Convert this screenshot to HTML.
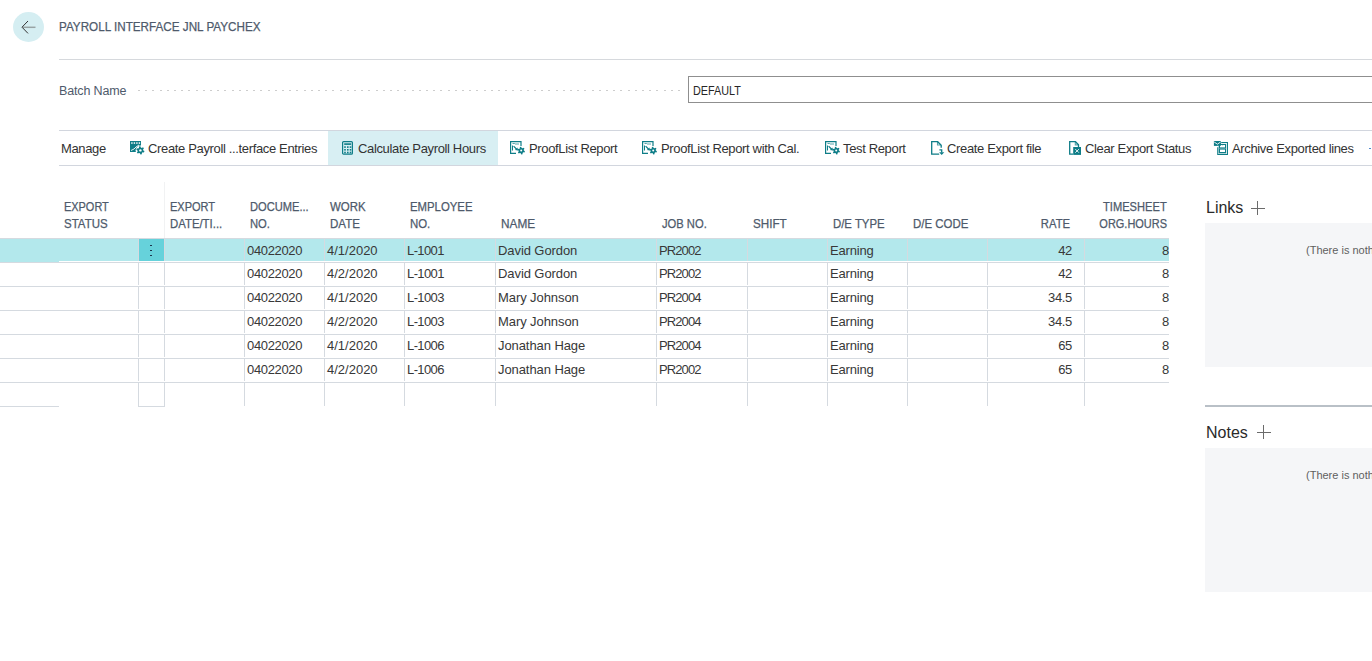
<!DOCTYPE html>
<html><head><meta charset="utf-8">
<style>
*{margin:0;padding:0;box-sizing:border-box}
html,body{width:1372px;height:661px;overflow:hidden;background:#fff}
body{position:relative;font-family:"Liberation Sans", sans-serif;color:#212121}
.a{position:absolute;white-space:nowrap}
svg{position:absolute;overflow:visible}
</style></head><body>

<div class="a" style="left:13px;top:12px;width:31px;height:30px;border-radius:50%;background:#d5eef2"></div>
<svg style="left:0;top:0" width="60" height="60"><path d="M23 27.3H35.5" fill="none" stroke="#98a3a4" stroke-width="1.5"/><path d="M28 21L22 27.2L28 33.4" fill="none" stroke="#333" stroke-width="1"/></svg>
<div class="a " style="left:59px;top:21px;font-size:12.5px;line-height:12.5px;color:#4e5a6b;transform:scaleX(0.935);transform-origin:0 0;-webkit-text-stroke:0.25px #4e5a6b;">PAYROLL INTERFACE JNL PAYCHEX</div>
<div class="a" style="left:59px;top:59px;width:1313px;height:1px;background:#d6d9dd;"></div>
<div class="a " style="left:59px;top:85px;font-size:12.5px;line-height:12.5px;color:#4e5a6b;letter-spacing:-0.15px;">Batch Name</div>
<svg style="left:0;top:0" width="700" height="100"><path fill="#cdcdcd" d="M138 90h2v1h-2zM145 90h2v1h-2zM152 90h2v1h-2zM160 90h2v1h-2zM167 90h2v1h-2zM174 90h2v1h-2zM181 90h2v1h-2zM188 90h2v1h-2zM196 90h2v1h-2zM203 90h2v1h-2zM210 90h2v1h-2zM217 90h2v1h-2zM224 90h2v1h-2zM232 90h2v1h-2zM239 90h2v1h-2zM246 90h2v1h-2zM253 90h2v1h-2zM260 90h2v1h-2zM268 90h2v1h-2zM275 90h2v1h-2zM282 90h2v1h-2zM289 90h2v1h-2zM296 90h2v1h-2zM304 90h2v1h-2zM311 90h2v1h-2zM318 90h2v1h-2zM325 90h2v1h-2zM332 90h2v1h-2zM340 90h2v1h-2zM347 90h2v1h-2zM354 90h2v1h-2zM361 90h2v1h-2zM368 90h2v1h-2zM376 90h2v1h-2zM383 90h2v1h-2zM390 90h2v1h-2zM397 90h2v1h-2zM404 90h2v1h-2zM412 90h2v1h-2zM419 90h2v1h-2zM426 90h2v1h-2zM433 90h2v1h-2zM440 90h2v1h-2zM448 90h2v1h-2zM455 90h2v1h-2zM462 90h2v1h-2zM469 90h2v1h-2zM476 90h2v1h-2zM484 90h2v1h-2zM491 90h2v1h-2zM498 90h2v1h-2zM505 90h2v1h-2zM512 90h2v1h-2zM520 90h2v1h-2zM527 90h2v1h-2zM534 90h2v1h-2zM541 90h2v1h-2zM548 90h2v1h-2zM556 90h2v1h-2zM563 90h2v1h-2zM570 90h2v1h-2zM577 90h2v1h-2zM584 90h2v1h-2zM592 90h2v1h-2zM599 90h2v1h-2zM606 90h2v1h-2zM613 90h2v1h-2zM620 90h2v1h-2zM628 90h2v1h-2zM635 90h2v1h-2zM642 90h2v1h-2zM649 90h2v1h-2zM656 90h2v1h-2zM664 90h2v1h-2zM671 90h2v1h-2zM678 90h2v1h-2z"/></svg>
<div class="a" style="left:688px;top:76px;width:700px;height:27px;border:1px solid #8f8f8f"></div>
<div class="a " style="left:693px;top:85px;font-size:12px;line-height:12px;color:#262626;transform:scaleX(0.9);transform-origin:0 0;">DEFAULT</div>
<div class="a" style="left:59px;top:130px;width:1313px;height:1px;background:#d2d6de;"></div>
<div class="a" style="left:59px;top:165px;width:1313px;height:1px;background:#d2d6de;"></div>
<div class="a" style="left:328px;top:131px;width:170px;height:34px;background:#d8eff3;"></div>
<div class="a " style="left:61px;top:142px;font-size:13px;line-height:13px;color:#333333;letter-spacing:-0.35px;">Manage</div>
<div class="a " style="left:148px;top:142px;font-size:13px;line-height:13px;color:#333333;letter-spacing:-0.35px;">Create Payroll ...terface Entries</div>
<div class="a " style="left:358px;top:142px;font-size:13px;line-height:13px;color:#333333;letter-spacing:-0.35px;">Calculate Payroll Hours</div>
<div class="a " style="left:529px;top:142px;font-size:13px;line-height:13px;color:#333333;letter-spacing:-0.35px;">ProofList Report</div>
<div class="a " style="left:661px;top:142px;font-size:13px;line-height:13px;color:#333333;letter-spacing:-0.35px;">ProofList Report with Cal.</div>
<div class="a " style="left:843px;top:142px;font-size:13px;line-height:13px;color:#333333;letter-spacing:-0.35px;">Test Report</div>
<div class="a " style="left:947px;top:142px;font-size:13px;line-height:13px;color:#333333;letter-spacing:-0.35px;">Create Export file</div>
<div class="a " style="left:1085px;top:142px;font-size:13px;line-height:13px;color:#333333;letter-spacing:-0.35px;">Clear Export Status</div>
<div class="a " style="left:1232px;top:142px;font-size:13px;line-height:13px;color:#333333;letter-spacing:-0.35px;">Archive Exported lines</div>
<div class="a" style="left:1369px;top:147.5px;width:1.7px;height:1.7px;border-radius:1px;background:#3a78c8"></div>
<svg style="left:130px;top:141px" width="16" height="16" viewBox="0 0 16 16">
<rect x="0" y="0" width="11" height="11" fill="#0e7d87"/>
<rect x="1.2" y="1.3" width="1.4" height="1.5" fill="#fff"/><rect x="3.7" y="1.3" width="1.4" height="1.5" fill="#fff"/>
<rect x="6.2" y="1.3" width="1.4" height="1.5" fill="#fff"/><rect x="8.7" y="1.3" width="1.4" height="1.5" fill="#fff"/>
<path d="M1 9.5L4 8L6 6L9 4" stroke="#fff" stroke-width="0.9" fill="none"/>
<circle cx="10.4" cy="9.4" r="4.8" fill="#fff"/><path d="M13.30 9.40L14.45 10.04L13.95 11.45L12.65 11.23L11.85 11.91L11.87 13.23L10.40 13.50L9.95 12.26L8.95 11.91L7.82 12.59L6.85 11.45L7.69 10.44L7.50 9.40L6.35 8.76L6.85 7.35L8.15 7.57L8.95 6.89L8.93 5.57L10.40 5.30L10.85 6.54L11.85 6.89L12.98 6.21L13.95 7.35L13.11 8.36Z" fill="#0e7d87"/><circle cx="10.4" cy="9.4" r="1.2" fill="#fff"/>
</svg>
<svg style="left:341px;top:140px" width="14" height="16" viewBox="0 0 14 16">
<rect x="1.6" y="1.6" width="9.8" height="12.6" rx="1" fill="none" stroke="#0e7d87" stroke-width="1.2"/>
<rect x="3.2" y="3.3" width="7" height="1.6" fill="#0e7d87"/>
<g fill="#0e7d87"><rect x="3.2" y="6.3" width="1.6" height="1.6"/><rect x="6" y="6.3" width="1.6" height="1.6"/><rect x="8.7" y="6.3" width="1.6" height="1.6"/>
<rect x="3.2" y="9" width="1.6" height="1.6"/><rect x="6" y="9" width="1.6" height="1.6"/><rect x="8.7" y="9" width="1.6" height="1.6"/>
<rect x="3.2" y="11.7" width="1.6" height="1.6"/><rect x="6" y="11.7" width="1.6" height="1.6"/><rect x="8.7" y="11.7" width="1.6" height="1.6"/></g>
</svg>
<svg style="left:510px;top:141px" width="16" height="16" viewBox="0 0 16 16">
<path d="M6 12.4H0.6V0.6H11V5" fill="none" stroke="#0e7d87" stroke-width="1.2"/>
<path d="M2.5 2.5H4.5L5 3H9" stroke="#0e7d87" stroke-width="1" fill="none" opacity="0.7"/>
<path d="M2.5 4.5V9.5" stroke="#0e7d87" stroke-width="1" fill="none"/>
<circle cx="11.2" cy="9.6" r="4.5" fill="#fff"/><path d="M13.90 9.60L14.95 10.19L14.49 11.50L13.30 11.30L12.55 11.94L12.56 13.15L11.20 13.40L10.78 12.27L9.85 11.94L8.81 12.55L7.91 11.50L8.68 10.57L8.50 9.60L7.45 9.01L7.91 7.70L9.10 7.90L9.85 7.26L9.84 6.05L11.20 5.80L11.62 6.93L12.55 7.26L13.59 6.65L14.49 7.70L13.72 8.63Z" fill="#0e7d87"/><circle cx="11.2" cy="9.6" r="1.0" fill="#fff"/>
<path d="M3.6 5.2L6.9 8.5" stroke="#0e7d87" stroke-width="1.2" fill="none"/>
<path d="M8.0 9.6L4.9 9.1L7.5 6.5Z" fill="#0e7d87"/>
</svg>
<svg style="left:642px;top:141px" width="16" height="16" viewBox="0 0 16 16">
<path d="M6 12.4H0.6V0.6H11V5" fill="none" stroke="#0e7d87" stroke-width="1.2"/>
<path d="M2.5 2.5H4.5L5 3H9" stroke="#0e7d87" stroke-width="1" fill="none" opacity="0.7"/>
<path d="M2.5 4.5V9.5" stroke="#0e7d87" stroke-width="1" fill="none"/>
<circle cx="11.2" cy="9.6" r="4.5" fill="#fff"/><path d="M13.90 9.60L14.95 10.19L14.49 11.50L13.30 11.30L12.55 11.94L12.56 13.15L11.20 13.40L10.78 12.27L9.85 11.94L8.81 12.55L7.91 11.50L8.68 10.57L8.50 9.60L7.45 9.01L7.91 7.70L9.10 7.90L9.85 7.26L9.84 6.05L11.20 5.80L11.62 6.93L12.55 7.26L13.59 6.65L14.49 7.70L13.72 8.63Z" fill="#0e7d87"/><circle cx="11.2" cy="9.6" r="1.0" fill="#fff"/>
<path d="M3.6 5.2L6.9 8.5" stroke="#0e7d87" stroke-width="1.2" fill="none"/>
<path d="M8.0 9.6L4.9 9.1L7.5 6.5Z" fill="#0e7d87"/>
</svg>
<svg style="left:825px;top:141px" width="16" height="16" viewBox="0 0 16 16">
<path d="M6 12.4H0.6V0.6H11V5" fill="none" stroke="#0e7d87" stroke-width="1.2"/>
<path d="M2.5 2.5H4.5L5 3H9" stroke="#0e7d87" stroke-width="1" fill="none" opacity="0.7"/>
<path d="M2.5 4.5V9.5" stroke="#0e7d87" stroke-width="1" fill="none"/>
<circle cx="11.2" cy="9.6" r="4.5" fill="#fff"/><path d="M13.90 9.60L14.95 10.19L14.49 11.50L13.30 11.30L12.55 11.94L12.56 13.15L11.20 13.40L10.78 12.27L9.85 11.94L8.81 12.55L7.91 11.50L8.68 10.57L8.50 9.60L7.45 9.01L7.91 7.70L9.10 7.90L9.85 7.26L9.84 6.05L11.20 5.80L11.62 6.93L12.55 7.26L13.59 6.65L14.49 7.70L13.72 8.63Z" fill="#0e7d87"/><circle cx="11.2" cy="9.6" r="1.0" fill="#fff"/>
<path d="M3.6 5.2L6.9 8.5" stroke="#0e7d87" stroke-width="1.2" fill="none"/>
<path d="M8.0 9.6L4.9 9.1L7.5 6.5Z" fill="#0e7d87"/>
</svg>
<svg style="left:931px;top:141px" width="15" height="15" viewBox="0 0 15 15">
<path d="M8.2 13.2H0.7V0.7H6.7L10.2 4.2V6.8" fill="none" stroke="#0e7d87" stroke-width="1.3"/>
<path d="M6.5 1V4H9.8" fill="none" stroke="#0e7d87" stroke-width="1.1" opacity="0.7"/>
<path d="M8.4 8.9H10.7V11.6" fill="none" stroke="#0e7d87" stroke-width="1.3"/>
<path d="M8.1 11.2H13.3L10.7 14.1Z" fill="#0e7d87"/>
</svg>
<svg style="left:1069px;top:141px" width="14" height="15" viewBox="0 0 14 15">
<path d="M4 13.2H0.7V0.7H6.5L9.5 3.7V6" fill="none" stroke="#0e7d87" stroke-width="1.3"/>
<path d="M6.3 1V3.9H9.3" fill="none" stroke="#0e7d87" stroke-width="1.1" opacity="0.7"/>
<rect x="4.2" y="6" width="7.8" height="7.9" fill="#0e7d87"/>
<path d="M6.3 8.1L9.9 11.7M9.9 8.1L6.3 11.7" stroke="#fff" stroke-width="0.9"/>
</svg>
<svg style="left:1213px;top:141px" width="16" height="15" viewBox="0 0 16 15">
<rect x="0.9" y="0" width="7" height="4.9" fill="#0e7d87"/>
<path d="M1.2 1L4.4 3.2L7.6 1" stroke="#fff" stroke-width="0.9" fill="none"/>
<rect x="4" y="4.9" width="4" height="2" fill="#fff"/>
<path d="M8.2 1.55H14.45V13.45H4.75V6.2" fill="none" stroke="#0e7d87" stroke-width="1.1"/>
<path d="M5.9 5V12.3H13.2" fill="none" stroke="#0e7d87" stroke-width="0.8" opacity="0.45"/>
<rect x="6.45" y="3.45" width="6.1" height="3.5" fill="none" stroke="#0e7d87" stroke-width="1.1"/>
<rect x="6.45" y="8.05" width="6.1" height="3.5" fill="none" stroke="#0e7d87" stroke-width="1.1"/>
<rect x="8.8" y="3" width="1.4" height="1.2" fill="#0e7d87"/>
</svg>
<div class="a" style="left:164px;top:182px;width:1px;height:56px;background:#f1f2f3;"></div>
<div class="a " style="left:64px;top:201px;font-size:12px;line-height:12px;color:#4e5a6b;-webkit-text-stroke:0.25px #4e5a6b;transform:scaleX(0.911);transform-origin:0 0;">EXPORT</div>
<div class="a " style="left:64px;top:218px;font-size:12px;line-height:12px;color:#4e5a6b;-webkit-text-stroke:0.25px #4e5a6b;transform:scaleX(0.957);transform-origin:0 0;">STATUS</div>
<div class="a " style="left:170px;top:201px;font-size:12px;line-height:12px;color:#4e5a6b;-webkit-text-stroke:0.25px #4e5a6b;transform:scaleX(0.918);transform-origin:0 0;">EXPORT</div>
<div class="a " style="left:170px;top:218px;font-size:12px;line-height:12px;color:#4e5a6b;-webkit-text-stroke:0.25px #4e5a6b;transform:scaleX(0.947);transform-origin:0 0;">DATE/TI...</div>
<div class="a " style="left:250px;top:201px;font-size:12px;line-height:12px;color:#4e5a6b;-webkit-text-stroke:0.25px #4e5a6b;transform:scaleX(0.927);transform-origin:0 0;">DOCUME...</div>
<div class="a " style="left:250px;top:218px;font-size:12px;line-height:12px;color:#4e5a6b;-webkit-text-stroke:0.25px #4e5a6b;transform:scaleX(0.935);transform-origin:0 0;">NO.</div>
<div class="a " style="left:330px;top:201px;font-size:12px;line-height:12px;color:#4e5a6b;-webkit-text-stroke:0.25px #4e5a6b;transform:scaleX(0.955);transform-origin:0 0;">WORK</div>
<div class="a " style="left:330px;top:218px;font-size:12px;line-height:12px;color:#4e5a6b;-webkit-text-stroke:0.25px #4e5a6b;transform:scaleX(0.963);transform-origin:0 0;">DATE</div>
<div class="a " style="left:410px;top:201px;font-size:12px;line-height:12px;color:#4e5a6b;-webkit-text-stroke:0.25px #4e5a6b;transform:scaleX(0.946);transform-origin:0 0;">EMPLOYEE</div>
<div class="a " style="left:410px;top:218px;font-size:12px;line-height:12px;color:#4e5a6b;-webkit-text-stroke:0.25px #4e5a6b;transform:scaleX(0.951);transform-origin:0 0;">NO.</div>
<div class="a " style="left:501px;top:218px;font-size:12px;line-height:12px;color:#4e5a6b;-webkit-text-stroke:0.25px #4e5a6b;transform:scaleX(0.984);transform-origin:0 0;">NAME</div>
<div class="a " style="left:662px;top:218px;font-size:12px;line-height:12px;color:#4e5a6b;-webkit-text-stroke:0.25px #4e5a6b;transform:scaleX(0.932);transform-origin:0 0;">JOB NO.</div>
<div class="a " style="left:753px;top:218px;font-size:12px;line-height:12px;color:#4e5a6b;-webkit-text-stroke:0.25px #4e5a6b;transform:scaleX(0.972);transform-origin:0 0;">SHIFT</div>
<div class="a " style="left:833px;top:218px;font-size:12px;line-height:12px;color:#4e5a6b;-webkit-text-stroke:0.25px #4e5a6b;transform:scaleX(0.947);transform-origin:0 0;">D/E TYPE</div>
<div class="a " style="left:913px;top:218px;font-size:12px;line-height:12px;color:#4e5a6b;-webkit-text-stroke:0.25px #4e5a6b;transform:scaleX(0.953);transform-origin:0 0;">D/E CODE</div>
<div class="a " style="right:302px;top:218px;font-size:12px;line-height:12px;color:#4e5a6b;-webkit-text-stroke:0.25px #4e5a6b;transform:scaleX(0.94);transform-origin:100% 0;">RATE</div>
<div class="a " style="right:205px;top:201px;font-size:12px;line-height:12px;color:#4e5a6b;-webkit-text-stroke:0.25px #4e5a6b;transform:scaleX(0.926);transform-origin:100% 0;">TIMESHEET</div>
<div class="a " style="right:205px;top:218px;font-size:12px;line-height:12px;color:#4e5a6b;-webkit-text-stroke:0.25px #4e5a6b;transform:scaleX(0.914);transform-origin:100% 0;">ORG.HOURS</div>
<div class="a" style="left:0px;top:239px;width:1169px;height:22px;background:#b3e8ec;"></div>
<div class="a" style="left:0px;top:261px;width:59px;height:1px;background:#b3e8ec;"></div>
<div class="a" style="left:139px;top:239px;width:25px;height:22px;background:#66d2db;"></div>
<div class="a" style="left:59px;top:261px;width:1110px;height:1px;background:#ffffff;"></div>
<div class="a" style="left:150.4px;top:244.65px;width:1.7px;height:1.7px;border-radius:1px;background:#14203a"></div>
<div class="a" style="left:150.4px;top:249.65px;width:1.7px;height:1.7px;border-radius:1px;background:#14203a"></div>
<div class="a" style="left:150.4px;top:254.65px;width:1.7px;height:1.7px;border-radius:1px;background:#14203a"></div>
<div class="a" style="left:0px;top:238px;width:1169px;height:1px;background:#d5dae0;"></div>
<div class="a" style="left:0px;top:262px;width:1169px;height:1px;background:#d5dae0;"></div>
<div class="a" style="left:0px;top:286px;width:1169px;height:1px;background:#d5dae0;"></div>
<div class="a" style="left:0px;top:310px;width:1169px;height:1px;background:#d5dae0;"></div>
<div class="a" style="left:0px;top:334px;width:1169px;height:1px;background:#d5dae0;"></div>
<div class="a" style="left:0px;top:358px;width:1169px;height:1px;background:#d5dae0;"></div>
<div class="a" style="left:0px;top:382px;width:1169px;height:1px;background:#d5dae0;"></div>
<div class="a" style="left:0px;top:406px;width:59px;height:1px;background:#d5dae0;"></div>
<div class="a" style="left:138px;top:406px;width:27px;height:1px;background:#d5dae0;"></div>
<div class="a" style="left:138px;top:239px;width:1px;height:22px;background:#d5dae0;"></div>
<div class="a" style="left:164px;top:239px;width:1px;height:22px;background:#d5dae0;"></div>
<div class="a" style="left:244px;top:239px;width:1px;height:22px;background:#d5dae0;"></div>
<div class="a" style="left:324px;top:239px;width:1px;height:22px;background:#d5dae0;"></div>
<div class="a" style="left:404px;top:239px;width:1px;height:22px;background:#d5dae0;"></div>
<div class="a" style="left:495px;top:239px;width:1px;height:22px;background:#d5dae0;"></div>
<div class="a" style="left:656px;top:239px;width:1px;height:22px;background:#d5dae0;"></div>
<div class="a" style="left:747px;top:239px;width:1px;height:22px;background:#d5dae0;"></div>
<div class="a" style="left:827px;top:239px;width:1px;height:22px;background:#d5dae0;"></div>
<div class="a" style="left:907px;top:239px;width:1px;height:22px;background:#d5dae0;"></div>
<div class="a" style="left:987px;top:239px;width:1px;height:22px;background:#d5dae0;"></div>
<div class="a" style="left:1084px;top:239px;width:1px;height:22px;background:#d5dae0;"></div>
<div class="a" style="left:138px;top:263px;width:1px;height:22px;background:#d5dae0;"></div>
<div class="a" style="left:164px;top:263px;width:1px;height:22px;background:#d5dae0;"></div>
<div class="a" style="left:244px;top:263px;width:1px;height:22px;background:#d5dae0;"></div>
<div class="a" style="left:324px;top:263px;width:1px;height:22px;background:#d5dae0;"></div>
<div class="a" style="left:404px;top:263px;width:1px;height:22px;background:#d5dae0;"></div>
<div class="a" style="left:495px;top:263px;width:1px;height:22px;background:#d5dae0;"></div>
<div class="a" style="left:656px;top:263px;width:1px;height:22px;background:#d5dae0;"></div>
<div class="a" style="left:747px;top:263px;width:1px;height:22px;background:#d5dae0;"></div>
<div class="a" style="left:827px;top:263px;width:1px;height:22px;background:#d5dae0;"></div>
<div class="a" style="left:907px;top:263px;width:1px;height:22px;background:#d5dae0;"></div>
<div class="a" style="left:987px;top:263px;width:1px;height:22px;background:#d5dae0;"></div>
<div class="a" style="left:1084px;top:263px;width:1px;height:22px;background:#d5dae0;"></div>
<div class="a" style="left:138px;top:287px;width:1px;height:22px;background:#d5dae0;"></div>
<div class="a" style="left:164px;top:287px;width:1px;height:22px;background:#d5dae0;"></div>
<div class="a" style="left:244px;top:287px;width:1px;height:22px;background:#d5dae0;"></div>
<div class="a" style="left:324px;top:287px;width:1px;height:22px;background:#d5dae0;"></div>
<div class="a" style="left:404px;top:287px;width:1px;height:22px;background:#d5dae0;"></div>
<div class="a" style="left:495px;top:287px;width:1px;height:22px;background:#d5dae0;"></div>
<div class="a" style="left:656px;top:287px;width:1px;height:22px;background:#d5dae0;"></div>
<div class="a" style="left:747px;top:287px;width:1px;height:22px;background:#d5dae0;"></div>
<div class="a" style="left:827px;top:287px;width:1px;height:22px;background:#d5dae0;"></div>
<div class="a" style="left:907px;top:287px;width:1px;height:22px;background:#d5dae0;"></div>
<div class="a" style="left:987px;top:287px;width:1px;height:22px;background:#d5dae0;"></div>
<div class="a" style="left:1084px;top:287px;width:1px;height:22px;background:#d5dae0;"></div>
<div class="a" style="left:138px;top:311px;width:1px;height:22px;background:#d5dae0;"></div>
<div class="a" style="left:164px;top:311px;width:1px;height:22px;background:#d5dae0;"></div>
<div class="a" style="left:244px;top:311px;width:1px;height:22px;background:#d5dae0;"></div>
<div class="a" style="left:324px;top:311px;width:1px;height:22px;background:#d5dae0;"></div>
<div class="a" style="left:404px;top:311px;width:1px;height:22px;background:#d5dae0;"></div>
<div class="a" style="left:495px;top:311px;width:1px;height:22px;background:#d5dae0;"></div>
<div class="a" style="left:656px;top:311px;width:1px;height:22px;background:#d5dae0;"></div>
<div class="a" style="left:747px;top:311px;width:1px;height:22px;background:#d5dae0;"></div>
<div class="a" style="left:827px;top:311px;width:1px;height:22px;background:#d5dae0;"></div>
<div class="a" style="left:907px;top:311px;width:1px;height:22px;background:#d5dae0;"></div>
<div class="a" style="left:987px;top:311px;width:1px;height:22px;background:#d5dae0;"></div>
<div class="a" style="left:1084px;top:311px;width:1px;height:22px;background:#d5dae0;"></div>
<div class="a" style="left:138px;top:335px;width:1px;height:22px;background:#d5dae0;"></div>
<div class="a" style="left:164px;top:335px;width:1px;height:22px;background:#d5dae0;"></div>
<div class="a" style="left:244px;top:335px;width:1px;height:22px;background:#d5dae0;"></div>
<div class="a" style="left:324px;top:335px;width:1px;height:22px;background:#d5dae0;"></div>
<div class="a" style="left:404px;top:335px;width:1px;height:22px;background:#d5dae0;"></div>
<div class="a" style="left:495px;top:335px;width:1px;height:22px;background:#d5dae0;"></div>
<div class="a" style="left:656px;top:335px;width:1px;height:22px;background:#d5dae0;"></div>
<div class="a" style="left:747px;top:335px;width:1px;height:22px;background:#d5dae0;"></div>
<div class="a" style="left:827px;top:335px;width:1px;height:22px;background:#d5dae0;"></div>
<div class="a" style="left:907px;top:335px;width:1px;height:22px;background:#d5dae0;"></div>
<div class="a" style="left:987px;top:335px;width:1px;height:22px;background:#d5dae0;"></div>
<div class="a" style="left:1084px;top:335px;width:1px;height:22px;background:#d5dae0;"></div>
<div class="a" style="left:138px;top:359px;width:1px;height:22px;background:#d5dae0;"></div>
<div class="a" style="left:164px;top:359px;width:1px;height:22px;background:#d5dae0;"></div>
<div class="a" style="left:244px;top:359px;width:1px;height:22px;background:#d5dae0;"></div>
<div class="a" style="left:324px;top:359px;width:1px;height:22px;background:#d5dae0;"></div>
<div class="a" style="left:404px;top:359px;width:1px;height:22px;background:#d5dae0;"></div>
<div class="a" style="left:495px;top:359px;width:1px;height:22px;background:#d5dae0;"></div>
<div class="a" style="left:656px;top:359px;width:1px;height:22px;background:#d5dae0;"></div>
<div class="a" style="left:747px;top:359px;width:1px;height:22px;background:#d5dae0;"></div>
<div class="a" style="left:827px;top:359px;width:1px;height:22px;background:#d5dae0;"></div>
<div class="a" style="left:907px;top:359px;width:1px;height:22px;background:#d5dae0;"></div>
<div class="a" style="left:987px;top:359px;width:1px;height:22px;background:#d5dae0;"></div>
<div class="a" style="left:1084px;top:359px;width:1px;height:22px;background:#d5dae0;"></div>
<div class="a" style="left:138px;top:383px;width:1px;height:23px;background:#d5dae0;"></div>
<div class="a" style="left:164px;top:383px;width:1px;height:23px;background:#d5dae0;"></div>
<div class="a" style="left:244px;top:383px;width:1px;height:23px;background:#d5dae0;"></div>
<div class="a" style="left:324px;top:383px;width:1px;height:23px;background:#d5dae0;"></div>
<div class="a" style="left:404px;top:383px;width:1px;height:23px;background:#d5dae0;"></div>
<div class="a" style="left:495px;top:383px;width:1px;height:23px;background:#d5dae0;"></div>
<div class="a" style="left:656px;top:383px;width:1px;height:23px;background:#d5dae0;"></div>
<div class="a" style="left:747px;top:383px;width:1px;height:23px;background:#d5dae0;"></div>
<div class="a" style="left:827px;top:383px;width:1px;height:23px;background:#d5dae0;"></div>
<div class="a" style="left:907px;top:383px;width:1px;height:23px;background:#d5dae0;"></div>
<div class="a" style="left:987px;top:383px;width:1px;height:23px;background:#d5dae0;"></div>
<div class="a" style="left:1084px;top:383px;width:1px;height:23px;background:#d5dae0;"></div>
<div class="a " style="left:247px;top:244px;font-size:13px;line-height:13px;color:#383838;letter-spacing:-0.35px;">04022020</div>
<div class="a " style="left:327px;top:244px;font-size:13px;line-height:13px;color:#383838;letter-spacing:0.0px;">4/1/2020</div>
<div class="a " style="left:407px;top:244px;font-size:13px;line-height:13px;color:#383838;letter-spacing:-0.6px;">L-1001</div>
<div class="a " style="left:498px;top:244px;font-size:13px;line-height:13px;color:#383838;letter-spacing:-0.08px;">David Gordon</div>
<div class="a " style="left:659px;top:244px;font-size:13px;line-height:13px;color:#383838;letter-spacing:-0.9px;">PR2002</div>
<div class="a " style="left:830px;top:244px;font-size:13px;line-height:13px;color:#383838;letter-spacing:-0.18px;">Earning</div>
<div class="a " style="right:300px;top:244px;font-size:13px;line-height:13px;color:#383838;letter-spacing:-0.35px;">42</div>
<div class="a " style="right:203px;top:244px;font-size:13px;line-height:13px;color:#383838;letter-spacing:-0.35px;">8</div>
<div class="a " style="left:247px;top:267px;font-size:13px;line-height:13px;color:#383838;letter-spacing:-0.35px;">04022020</div>
<div class="a " style="left:327px;top:267px;font-size:13px;line-height:13px;color:#383838;letter-spacing:0.0px;">4/2/2020</div>
<div class="a " style="left:407px;top:267px;font-size:13px;line-height:13px;color:#383838;letter-spacing:-0.6px;">L-1001</div>
<div class="a " style="left:498px;top:267px;font-size:13px;line-height:13px;color:#383838;letter-spacing:-0.08px;">David Gordon</div>
<div class="a " style="left:659px;top:267px;font-size:13px;line-height:13px;color:#383838;letter-spacing:-0.9px;">PR2002</div>
<div class="a " style="left:830px;top:267px;font-size:13px;line-height:13px;color:#383838;letter-spacing:-0.18px;">Earning</div>
<div class="a " style="right:300px;top:267px;font-size:13px;line-height:13px;color:#383838;letter-spacing:-0.35px;">42</div>
<div class="a " style="right:203px;top:267px;font-size:13px;line-height:13px;color:#383838;letter-spacing:-0.35px;">8</div>
<div class="a " style="left:247px;top:291px;font-size:13px;line-height:13px;color:#383838;letter-spacing:-0.35px;">04022020</div>
<div class="a " style="left:327px;top:291px;font-size:13px;line-height:13px;color:#383838;letter-spacing:0.0px;">4/1/2020</div>
<div class="a " style="left:407px;top:291px;font-size:13px;line-height:13px;color:#383838;letter-spacing:-0.6px;">L-1003</div>
<div class="a " style="left:498px;top:291px;font-size:13px;line-height:13px;color:#383838;letter-spacing:-0.08px;">Mary Johnson</div>
<div class="a " style="left:659px;top:291px;font-size:13px;line-height:13px;color:#383838;letter-spacing:-0.9px;">PR2004</div>
<div class="a " style="left:830px;top:291px;font-size:13px;line-height:13px;color:#383838;letter-spacing:-0.18px;">Earning</div>
<div class="a " style="right:300px;top:291px;font-size:13px;line-height:13px;color:#383838;letter-spacing:-0.35px;">34.5</div>
<div class="a " style="right:203px;top:291px;font-size:13px;line-height:13px;color:#383838;letter-spacing:-0.35px;">8</div>
<div class="a " style="left:247px;top:315px;font-size:13px;line-height:13px;color:#383838;letter-spacing:-0.35px;">04022020</div>
<div class="a " style="left:327px;top:315px;font-size:13px;line-height:13px;color:#383838;letter-spacing:0.0px;">4/2/2020</div>
<div class="a " style="left:407px;top:315px;font-size:13px;line-height:13px;color:#383838;letter-spacing:-0.6px;">L-1003</div>
<div class="a " style="left:498px;top:315px;font-size:13px;line-height:13px;color:#383838;letter-spacing:-0.08px;">Mary Johnson</div>
<div class="a " style="left:659px;top:315px;font-size:13px;line-height:13px;color:#383838;letter-spacing:-0.9px;">PR2004</div>
<div class="a " style="left:830px;top:315px;font-size:13px;line-height:13px;color:#383838;letter-spacing:-0.18px;">Earning</div>
<div class="a " style="right:300px;top:315px;font-size:13px;line-height:13px;color:#383838;letter-spacing:-0.35px;">34.5</div>
<div class="a " style="right:203px;top:315px;font-size:13px;line-height:13px;color:#383838;letter-spacing:-0.35px;">8</div>
<div class="a " style="left:247px;top:339px;font-size:13px;line-height:13px;color:#383838;letter-spacing:-0.35px;">04022020</div>
<div class="a " style="left:327px;top:339px;font-size:13px;line-height:13px;color:#383838;letter-spacing:0.0px;">4/1/2020</div>
<div class="a " style="left:407px;top:339px;font-size:13px;line-height:13px;color:#383838;letter-spacing:-0.6px;">L-1006</div>
<div class="a " style="left:498px;top:339px;font-size:13px;line-height:13px;color:#383838;letter-spacing:-0.08px;">Jonathan Hage</div>
<div class="a " style="left:659px;top:339px;font-size:13px;line-height:13px;color:#383838;letter-spacing:-0.9px;">PR2004</div>
<div class="a " style="left:830px;top:339px;font-size:13px;line-height:13px;color:#383838;letter-spacing:-0.18px;">Earning</div>
<div class="a " style="right:300px;top:339px;font-size:13px;line-height:13px;color:#383838;letter-spacing:-0.35px;">65</div>
<div class="a " style="right:203px;top:339px;font-size:13px;line-height:13px;color:#383838;letter-spacing:-0.35px;">8</div>
<div class="a " style="left:247px;top:363px;font-size:13px;line-height:13px;color:#383838;letter-spacing:-0.35px;">04022020</div>
<div class="a " style="left:327px;top:363px;font-size:13px;line-height:13px;color:#383838;letter-spacing:0.0px;">4/2/2020</div>
<div class="a " style="left:407px;top:363px;font-size:13px;line-height:13px;color:#383838;letter-spacing:-0.6px;">L-1006</div>
<div class="a " style="left:498px;top:363px;font-size:13px;line-height:13px;color:#383838;letter-spacing:-0.08px;">Jonathan Hage</div>
<div class="a " style="left:659px;top:363px;font-size:13px;line-height:13px;color:#383838;letter-spacing:-0.9px;">PR2002</div>
<div class="a " style="left:830px;top:363px;font-size:13px;line-height:13px;color:#383838;letter-spacing:-0.18px;">Earning</div>
<div class="a " style="right:300px;top:363px;font-size:13px;line-height:13px;color:#383838;letter-spacing:-0.35px;">65</div>
<div class="a " style="right:203px;top:363px;font-size:13px;line-height:13px;color:#383838;letter-spacing:-0.35px;">8</div>
<div class="a " style="left:1206px;top:200px;font-size:16px;line-height:16px;color:#2a2a2a;">Links</div>
<svg style="left:1251px;top:201px" width="14" height="14"><path d="M6.5 0V14M0 7.5H14" stroke="#6b6b6b" stroke-width="1"/></svg>
<div class="a" style="left:1205px;top:223px;width:167px;height:144px;background:#f5f6f8;"></div>
<div class="a " style="left:1306px;top:245px;font-size:11px;line-height:11px;color:#5f5f5f;">(There is nothing to show)</div>
<div class="a" style="left:1205px;top:405px;width:167px;height:2px;background:#b9c0c7;"></div>
<div class="a " style="left:1206px;top:425px;font-size:16px;line-height:16px;color:#2a2a2a;">Notes</div>
<svg style="left:1257px;top:425px" width="14" height="14"><path d="M6.5 0V14M0 7.5H14" stroke="#6b6b6b" stroke-width="1"/></svg>
<div class="a" style="left:1205px;top:448px;width:167px;height:144px;background:#f5f6f8;"></div>
<div class="a " style="left:1306px;top:470px;font-size:11px;line-height:11px;color:#5f5f5f;">(There is nothing to show)</div>
</body></html>
